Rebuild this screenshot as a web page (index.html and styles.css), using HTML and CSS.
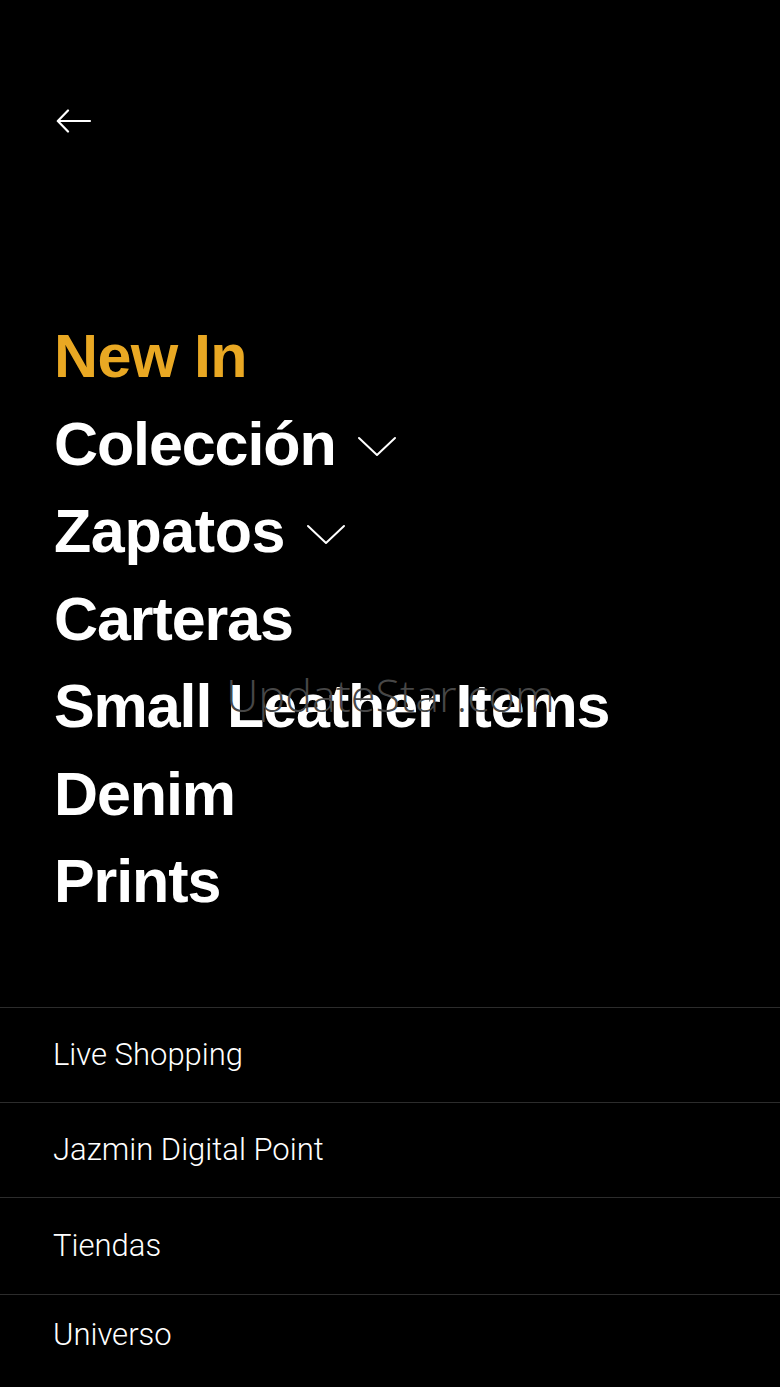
FILE: index.html
```html
<!DOCTYPE html>
<html lang="es">
<head>
<meta charset="utf-8">
<title>Menu</title>
<link rel="stylesheet" href="styles.css">
</head>
<body>
<div class="screen">
  <header class="top">
    <button class="back" aria-label="Volver">
      <svg width="36" height="24" viewBox="0 0 36 24" fill="none" stroke="#fff" stroke-width="2.2" stroke-linecap="round" stroke-linejoin="round">
        <path d="M2 12H34M12 1.5L1.8 12L12 22.5"/>
      </svg>
    </button>
  </header>

  <nav class="main-nav">
    <a class="main-link main-link--accent" href="#">New In</a>
    <a class="main-link" href="#">Colección<svg class="chev" width="40" height="22" viewBox="0 0 40 22" fill="none" stroke="#fff" stroke-width="2" stroke-linecap="round" stroke-linejoin="round"><path d="M2 2L20 19L38 2"/></svg></a>
    <a class="main-link main-link--wide" href="#">Zapatos<svg class="chev" width="40" height="22" viewBox="0 0 40 22" fill="none" stroke="#fff" stroke-width="2" stroke-linecap="round" stroke-linejoin="round"><path d="M2 2L20 19L38 2"/></svg></a>
    <a class="main-link" href="#">Carteras</a>
    <a class="main-link" href="#">Small Leather Items</a>
    <a class="main-link" href="#">Denim</a>
    <a class="main-link" href="#">Prints</a>
  </nav>

  <ul class="sub-nav">
    <li class="sub-row"><a href="#">Live Shopping</a></li>
    <li class="sub-row"><a href="#">Jazmin Digital Point</a></li>
    <li class="sub-row sub-row--tall"><a href="#">Tiendas</a></li>
    <li class="sub-row sub-row--last"><a href="#">Universo</a></li>
  </ul>

  <div class="watermark">UpdateStar.com</div>
</div>
</body>
</html>
```

FILE: styles.css
```css
* { box-sizing: border-box; }
html, body {
  margin: 0;
  padding: 0;
  background: #000;
}
body {
  font-family: "Liberation Sans", Arial, sans-serif;
  color: #fff;
}
.screen {
  position: relative;
  width: 780px;
  height: 1387px;
  overflow: hidden;
  background: #000;
}
.top {
  height: 313px;
  padding: 109px 0 0 56px;
}
.back {
  display: block;
  padding: 0;
  margin: 0;
  border: 0;
  background: none;
  width: 36px;
  height: 24px;
}
.back svg { display: block; }

.main-nav {
  display: flex;
  flex-direction: column;
  align-items: flex-start;
  padding-left: 54px;
}
.main-link {
  display: flex;
  align-items: center;
  height: 87.5px;
  font-size: 61px;
  font-weight: 700;
  letter-spacing: -1.1px;
  color: #fff;
  text-decoration: none;
  line-height: 87.5px;
}
.main-link--accent { color: #e9a823; letter-spacing: -0.6px; }
.main-link--wide { letter-spacing: -0.4px; }
.chev {
  margin-left: 21px;
  margin-top: 6px;
  flex: none;
}

.sub-nav {
  list-style: none;
  margin: 81px 0 0;
  padding: 0;
}
.sub-row {
  height: 95px;
  border-top: 1px solid #2c2c2c;
  display: flex;
  align-items: center;
  padding-left: 53px;
}
.sub-row--tall { height: 97px; }
.sub-row--last { padding-bottom: 14px; }
.sub-row a {
  font-family: Roboto, "Liberation Sans", sans-serif;
  font-size: 31px;
  font-weight: 300;
  color: #fff;
  text-decoration: none;
  letter-spacing: 0;
}

.watermark {
  position: absolute;
  left: 226px;
  top: 664px;
  font-family: "Open Sans", "Liberation Sans", sans-serif;
  font-weight: 300;
  font-size: 45px;
  color: #474747;
  letter-spacing: 0;
  pointer-events: none;
}
```
